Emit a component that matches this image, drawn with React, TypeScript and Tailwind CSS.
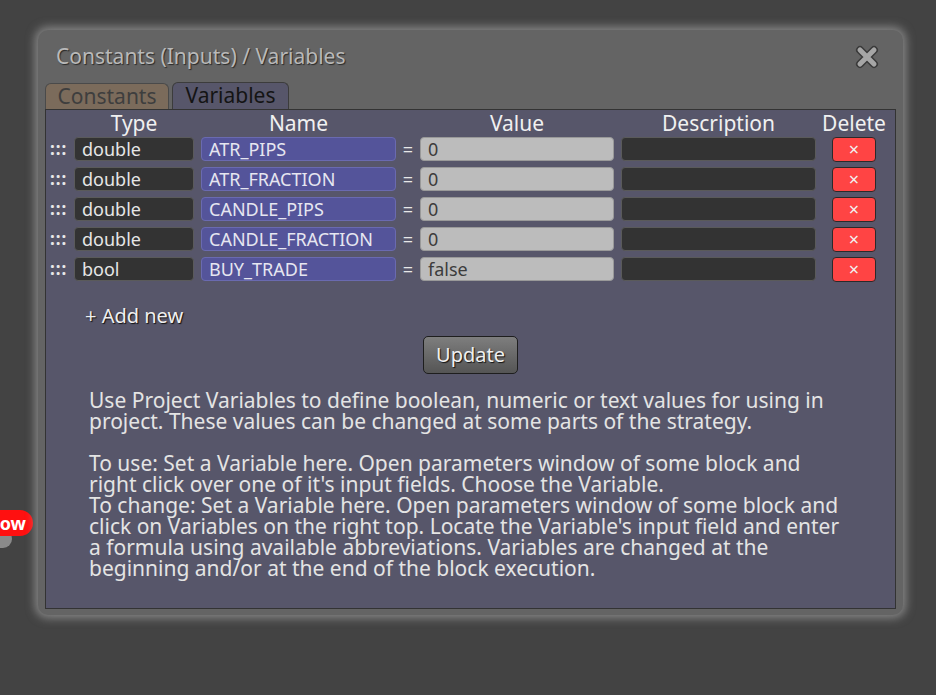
const rows = [
  { type: "double", name: "ATR_PIPS", value: "0" },
  { type: "double", name: "ATR_FRACTION", value: "0" },
  { type: "double", name: "CANDLE_PIPS", value: "0" },
  { type: "double", name: "CANDLE_FRACTION", value: "0" },
  { type: "bool", name: "BUY_TRADE", value: "false" },
];

const help = [
  "Use Project Variables to define boolean, numeric or text values for using in",
  "project. These values can be changed at some parts of the strategy.",
  "",
  "To use: Set a Variable here. Open parameters window of some block and",
  "right click over one of it's input fields. Choose the Variable.",
  "To change: Set a Variable here. Open parameters window of some block and",
  "click on Variables on the right top. Locate the Variable's input field and enter",
  "a formula using available abbreviations. Variables are changed at the",
  "beginning and/or at the end of the block execution.",
];

function CloseIcon() {
  return (
    <svg width="26" height="26" viewBox="0 0 26 26">
      <path
        d="M6 6 L20 20 M20 6 L6 20"
        stroke="#3a3a3a"
        strokeWidth="8"
        strokeLinecap="round"
      />
      <path
        d="M6 6 L20 20 M20 6 L6 20"
        stroke="#a6a6a6"
        strokeWidth="5"
        strokeLinecap="round"
      />
    </svg>
  );
}

export default function App() {
  return (
    <div className="relative h-[695px] w-[936px] overflow-hidden bg-[#434343] pt-[30px] pl-[38px] font-['Noto_Sans','Open_Sans',sans-serif]">
      {/* leftover badge behind the dialog */}
      <div className="absolute left-[-14px] top-[530px] h-[18px] w-[26px] rounded-full bg-[#8a8a8a]" />
      <div className="absolute left-[-30px] top-[510px] flex h-[26px] w-[63px] items-center justify-end rounded-full bg-[#ff1010] pr-[7px] text-[18px] font-bold text-white">
        ow
      </div>

      {/* Dialog */}
      <div className="relative flex h-[585px] w-[865px] flex-col rounded-[10px] bg-[#646464] px-[7px] pb-[6px] shadow-[0_0_10px_3px_rgba(190,190,190,0.55)]">
        <div className="flex h-[53px] items-center justify-between pl-[11px] pr-[16px]">
          <span className="text-[21px] text-[#b9b9b9] [text-shadow:1px_1px_1px_#2a2a2a]">
            Constants (Inputs) / Variables
          </span>
          <CloseIcon />
        </div>

        {/* Tabs */}
        <div className="flex h-[26px] items-end gap-[3px]">
          <div className="flex h-[26px] w-[124px] items-center justify-center rounded-t-[6px] border border-b-0 border-[#4a4a4a] bg-[#7b6b5b] text-[21px] text-[#3e3e3e]">
            Constants
          </div>
          <div className="flex h-[27px] w-[117px] items-center justify-center rounded-t-[6px] border border-b-0 border-[#3c3c3c] bg-[#57566a] text-[21px] text-[#141414]">
            Variables
          </div>
        </div>

        {/* Panel */}
        <div className="flex flex-1 flex-col border border-[#333] bg-[#57566a] pl-[4px]">
          <div className="flex h-[26px] items-center text-[21px] leading-none text-[#f0f0f0]">
            <span className="w-[24px]" />
            <span className="w-[120px] text-center">Type</span>
            <span className="ml-[7px] w-[195px] text-center">Name</span>
            <span className="w-[24px]" />
            <span className="w-[194px] text-center">Value</span>
            <span className="ml-[7px] w-[195px] text-center">Description</span>
            <span className="ml-[6px] w-[64px] text-center">Delete</span>
          </div>

          <div className="mt-[1px] flex flex-col gap-[6px]">
            {rows.map((r) => (
              <div key={r.name} className="flex h-[24px] items-center text-[18px]">
                <span className="w-[24px] text-[17px] font-bold tracking-[1px] text-[#e8e8e8]">
                  :::
                </span>
                <div className="flex h-[24px] w-[120px] items-center rounded-[4px] border border-[#5a5a5a] bg-[#333333] pl-[7px] text-[#e6e6e6]">
                  {r.type}
                </div>
                <div className="ml-[7px] flex h-[24px] w-[195px] items-center rounded-[4px] border border-[#6a6ab0] bg-[#54549a] pl-[7px] text-[#e6e6f0]">
                  {r.name}
                </div>
                <span className="w-[24px] text-center text-[#e8e8e8]">=</span>
                <div className="flex h-[24px] w-[194px] items-center rounded-[4px] border border-[#999] bg-[#bcbcbc] pl-[7px] text-[#3c3c3c]">
                  {r.value}
                </div>
                <div className="ml-[7px] h-[24px] w-[195px] rounded-[4px] border border-[#5a5a5a] bg-[#333333]" />
                <div className="ml-[16px] flex h-[25px] w-[44px] items-center justify-center rounded-[4px] border border-[#2a2a2a] bg-[#ff4444] text-[18px] text-[#f2f2f2]">
                  ×
                </div>
              </div>
            ))}
          </div>

          <div className="mt-[20px] pl-[35px] text-[20px] text-[#f0f0f0] [text-shadow:1px_1px_1px_#111]">
            + Add new
          </div>

          <div className="mt-[5px] flex justify-center pr-[4px]">
            <button className="h-[38px] w-[95px] rounded-[5px] border border-[#1e1e1e] bg-gradient-to-b from-[#7e7e7e] to-[#555555] text-[20px] text-[#f0f0f0] [text-shadow:1px_1px_1px_#111]">
              Update
            </button>
          </div>

          <div className="mt-[16px] pl-[39px] text-[21px] leading-[21px] text-[#e4e4e4]">
            {help.map((line, i) => (
              <div key={i} className="h-[21px] whitespace-nowrap">
                {line}
              </div>
            ))}
          </div>
        </div>
      </div>
    </div>
  );
}
